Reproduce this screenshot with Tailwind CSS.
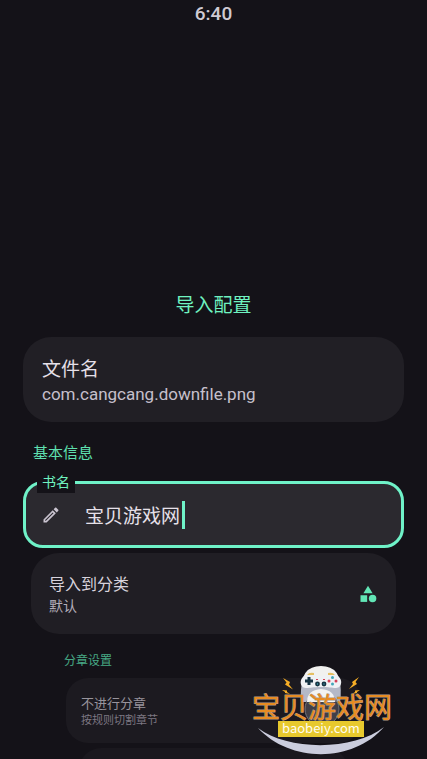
<!DOCTYPE html>
<html lang="zh-CN">
<head>
<meta charset="utf-8">
<meta name="viewport" content="width=device-width, initial-scale=1">
<title>导入配置</title>
<script src="https://cdn.jsdelivr.net/npm/@tailwindcss/browser@4"></script>
</head>
<body class="bg-[#141218] font-[Roboto,'Noto_Sans_CJK_SC',sans-serif] text-[#e6e0e9]">
<div class="relative flex h-screen flex-col overflow-hidden">
  <header class="flex h-7 shrink-0 items-center justify-center text-[19px] font-medium text-[#cfcad3]"><time>6:40</time></header>

  <main class="mt-[264px] flex shrink-0 flex-col px-[23px]">
    <h1 class="text-center text-[19px] leading-7 text-[#6ff2c0]">导入配置</h1>

    <section class="mt-[17px] flex h-[85px] flex-col justify-center rounded-[28px] bg-[#211f25] px-[19px]">
      <h2 class="pt-1 text-[19px] leading-6">文件名</h2>
      <p class="text-[17px] leading-6 text-[#c6c0cc]">com.cangcang.downfile.png</p>
    </section>

    <h2 class="mt-[21px] px-[10px] text-[15px] leading-5 text-[#5fe0b0]">基本信息</h2>

    <div class="relative mt-[18px] flex h-[67px] items-center rounded-[20px] border-3 border-[#6ff2c8] bg-[#2b292f] pl-[15px]">
      <label for="book" class="absolute -top-[10px] left-[11px] bg-[#141218] px-[5px] pb-[2px] text-sm leading-[17px] text-[#6ff2c0]">书名</label>
      <svg class="size-5 text-[#cac4d0]" viewBox="0 0 24 24" fill="currentColor" aria-hidden="true"><path d="M14.06 9.02l.92.92L5.92 19H5v-.92l9.06-9.06M17.66 3c-.25 0-.51.1-.7.29l-1.83 1.83 3.75 3.75 1.83-1.83c.39-.39.39-1.02 0-1.41l-2.34-2.34c-.2-.2-.45-.29-.71-.29zm-3.6 3.19L3 17.25V21h3.75L17.81 9.94l-3.75-3.75z"/></svg>
      <input id="book" type="text" value="宝贝游戏网" class="ml-6 field-sizing-content pt-1 text-[19px] leading-7 outline-none">
      <span class="ml-[2px] h-7 w-[3px] bg-[#6ff2c8]" aria-hidden="true"></span>
    </div>

    <button type="button" class="mx-2 mt-[5px] flex h-[81px] items-center justify-between rounded-[28px] bg-[#201e24] px-[18px] text-left">
      <span class="flex flex-col">
        <span class="pt-[2px] text-base leading-[22px] text-[#d8d3dc]">导入到分类</span>
        <span class="text-sm leading-5 text-[#b3adb9]">默认</span>
      </span>
      <svg class="size-5 text-[#62e6b6]" viewBox="0 0 24 24" fill="currentColor" aria-hidden="true"><path d="M12 2 6.5 11h11z"/><circle cx="17.5" cy="17.5" r="4.5"/><path d="M3 13.5h8v8H3z"/></svg>
    </button>

    <h2 class="mt-[18px] px-[41px] text-xs leading-[18px] text-[#47a985]">分章设置</h2>
    <button type="button" class="mx-[43px] mt-2 flex h-[65px] flex-col justify-center rounded-[22px] bg-[#1c1a20] px-[15px] text-left">
      <span class="pt-[2px] text-[13px] leading-[18px] text-[#98949c]">不进行分章</span>
      <span class="text-[11px] leading-4 text-[#7c7782]">按规则切割章节</span>
    </button>
    <div class="mx-14 mt-[5px] h-[65px] rounded-[22px] bg-[#1a181e]"></div>
  </main>

  <svg class="absolute right-[29px] bottom-0 h-[99px] w-[151px]" viewBox="247 660 151 99" role="img" aria-label="宝贝游戏网 baobeiy.com">
    <path d="M258 728C288 751 354 751 384 727C353 763 290 763 258 728Z" fill="#cbcddd"/>
    <path d="M302 692Q300 666 321 666Q342 666 340 692Z" fill="#f1f1ef"/>
    <path d="M303 678Q311 675 321 679Q331 675 339 678Q342 690 340 702H301Q300 690 303 678Z" fill="#b4b9c7"/>
    <circle cx="322" cy="709" r="17" fill="#515058" fill-opacity=".7" stroke="#77767d"/>
    <path d="M307 702Q307 690 321 689Q335 690 335 702Z" fill="#f3f3f2"/>
    <path d="M309 674C315 674 317 676 321 676S327 674 333 674C344 676 343 688 336 688C331 688 330 687 321 687S311 688 306 688C299 688 298 676 309 674Z" fill="#eff1f4"/>
    <path d="M307 675Q309 672 314 673V675ZM328 673Q333 672 335 675L328 675Z" fill="#e5bf62"/>
    <path d="M307.5 677h3v2.500h2.500v3h-2.500v2.500h-3v-2.500h-2.500v-3h2.500z" fill="#153342"/>
    <g fill="#153342"><circle cx="317.500" cy="684" r="2.400"/><circle cx="324" cy="684" r="2.400"/></g>
    <g fill="#40a7b8"><circle cx="317.500" cy="684" r=".7"/><circle cx="324" cy="684" r=".7"/><circle cx="332.500" cy="677.500" r="1.500"/><circle cx="332.500" cy="684" r="1.500"/></g>
    <g fill="#d43f56"><circle cx="329" cy="681" r="1.500"/><circle cx="336" cy="681" r="1.500"/><path d="M316 679h2v1h-2zM323 679h2v1h-2z"/></g>
    <g fill="#f5ad26"><path d="M283 678l7 4-1 2.500 4 5-8-5 1.500-2zM282 690l5 .5v1.500l3 2-5-1v-1zM359 677l-7 5 1 2-4 5 8-5-1.500-2zM360 690l-5 .5v1.500l-3 2 5-1v-1z"/></g>
    <text x="252" y="718" font-family="Noto Sans CJK SC, sans-serif" font-size="28" font-weight="400" fill="#e78c23" stroke="#ad9b88" stroke-width="1" stroke-linejoin="round" paint-order="stroke">宝贝游戏网</text>
    <path d="M278 721h86v16h-86z" fill="#e8c92d"/>
    <text x="321" y="733" text-anchor="middle" font-family="Noto Sans CJK SC, sans-serif" font-size="13" font-weight="400" fill="#fffdf0">baobeiy.com</text>
  </svg>
</div>
</body>
</html>
